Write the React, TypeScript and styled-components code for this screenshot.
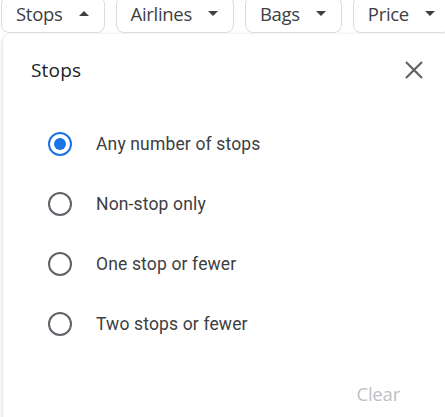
import React, { FC } from "react";
import styled, { createGlobalStyle } from "styled-components";

const GlobalStyle = createGlobalStyle`
  html, body {
    margin: 0;
    padding: 0;
    background: #fff;
    overflow: hidden;
  }
  body {
    font-family: Roboto, "Liberation Sans", Arial, sans-serif;
  }
`;

const Page = styled.div`
  width: 445px;
  height: 417px;
  overflow: hidden;
`;

const ChipBar = styled.div`
  display: flex;
  gap: 11px;
  margin-top: -4px;
  padding-left: 1px;
`;

const Chip = styled.button`
  display: flex;
  align-items: center;
  flex-shrink: 0;
  height: 37px;
  padding: 0 15px 3px 14px;
  border: 1px solid #dadce0;
  border-radius: 8px;
  background: #fff;
  color: #3c4043;
  font-family: "Open Sans", Roboto, sans-serif;
  font-size: 18.5px;
  font-weight: 500;
  letter-spacing: -0.3px;
  cursor: pointer;
`;

const Caret = styled.span<{ $up?: boolean }>`
  width: 0;
  height: 0;
  margin-left: 16px;
  border-left: 5px solid transparent;
  border-right: 5px solid transparent;
  ${(p) =>
    p.$up ? "border-bottom: 5px solid #3c4043;" : "border-top: 5px solid #3c4043;"}
`;

const Panel = styled.div`
  margin: 1px 0 0 3px;
  width: 470px;
  height: 420px;
  padding: 24px 0 0 0;
  box-sizing: border-box;
  background: #fff;
  border-radius: 8px;
  box-shadow: 0 1px 3px rgba(60, 64, 67, 0.22), 0 2px 6px 1px rgba(60, 64, 67, 0.08);
`;

const Header = styled.div`
  display: flex;
  align-items: center;
  justify-content: space-between;
  width: 442px;
  padding: 0 0 0 28px;
  box-sizing: border-box;
  height: 24px;
`;

const Title = styled.div`
  font-family: "Open Sans", Roboto, sans-serif;
  font-size: 19px;
  color: #202124;
  letter-spacing: 0.2px;
`;

const CloseButton = styled.button`
  display: flex;
  align-items: center;
  justify-content: center;
  width: 40px;
  height: 40px;
  margin-right: 11px;
  border: none;
  background: none;
  padding: 0;
  cursor: pointer;
`;

const OptionList = styled.div`
  display: flex;
  flex-direction: column;
  margin-top: 32px;
`;

const Option = styled.label`
  display: flex;
  align-items: center;
  height: 60px;
  padding-left: 45px;
  cursor: pointer;
`;

const Radio = styled.span<{ $checked?: boolean }>`
  display: flex;
  align-items: center;
  justify-content: center;
  width: 24px;
  height: 24px;
  box-sizing: border-box;
  border-radius: 50%;
  border: 2.2px solid ${(p) => (p.$checked ? "#1a73e8" : "#5f6368")};
  &::after {
    content: "";
    display: ${(p) => (p.$checked ? "block" : "none")};
    width: 12px;
    height: 12px;
    border-radius: 50%;
    background: #1a73e8;
  }
`;

const OptionText = styled.span`
  margin-left: 24px;
  font-size: 17.5px;
  color: #3c4043;
  letter-spacing: 0.15px;
`;

const Footer = styled.div`
  display: flex;
  justify-content: flex-end;
  width: 442px;
  padding-right: 45px;
  box-sizing: border-box;
  margin-top: 27px;
`;

const ClearButton = styled.button`
  border: none;
  background: none;
  padding: 0;
  height: 24px;
  font-family: "Open Sans", Roboto, sans-serif;
  font-size: 18.5px;
  font-weight: 500;
  letter-spacing: -0.2px;
  color: #bdc1c6;
`;

const chips = [
  { label: "Stops", open: true },
  { label: "Airlines" },
  { label: "Bags" },
  { label: "Price" },
];

const options = [
  "Any number of stops",
  "Non-stop only",
  "One stop or fewer",
  "Two stops or fewer",
];

const App: FC = () => {
  return (
    <Page>
      <GlobalStyle />
      <ChipBar>
        {chips.map((c) => (
          <Chip key={c.label}>
            {c.label}
            <Caret $up={c.open} />
          </Chip>
        ))}
      </ChipBar>
      <Panel>
        <Header>
          <Title>Stops</Title>
          <CloseButton aria-label="Close">
            <svg width="20" height="20" viewBox="0 0 20 20">
              <path
                d="M2 2 L18 18 M18 2 L2 18"
                stroke="#5f6368"
                strokeWidth="2.2"
                strokeLinecap="butt"
              />
            </svg>
          </CloseButton>
        </Header>
        <OptionList>
          {options.map((o, i) => (
            <Option key={o}>
              <Radio $checked={i === 0} />
              <OptionText>{o}</OptionText>
            </Option>
          ))}
        </OptionList>
        <Footer>
          <ClearButton>Clear</ClearButton>
        </Footer>
      </Panel>
    </Page>
  );
};

export default App;
